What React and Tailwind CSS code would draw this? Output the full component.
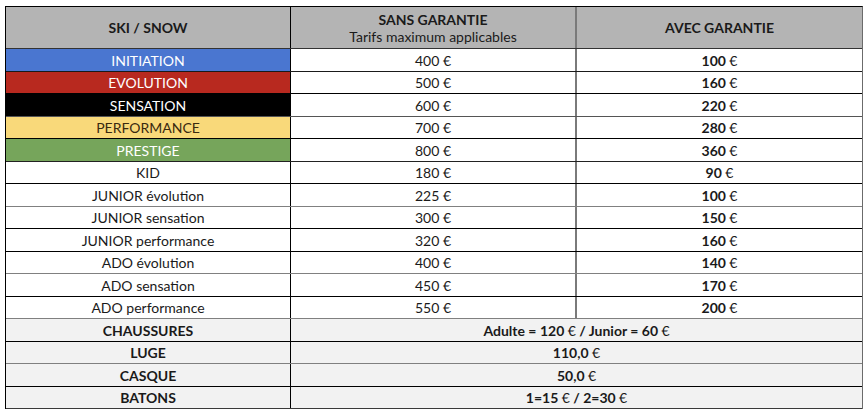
import React from 'react';

const rows = [
  { label: 'INITIATION', cls: 'bg-[#4a76d0] text-white', sans: '400', avec: '100', line: 'border-[#1a1a1a]' },
  { label: 'EVOLUTION', cls: 'bg-[#b8291f] text-white', sans: '500', avec: '160', line: 'border-black' },
  { label: 'SENSATION', cls: 'bg-black text-white', sans: '600', avec: '220', line: 'border-[#555]' },
  { label: 'PERFORMANCE', cls: 'bg-[#f9d97a] text-[#3a2a10]', sans: '700', avec: '280', line: 'border-black' },
  { label: 'PRESTIGE', cls: 'bg-[#76a55b] text-white', sans: '800', avec: '360', line: 'border-[#222]' },
  { label: 'KID', cls: 'bg-white text-[#1a1a1a]', sans: '180', avec: '90', line: 'border-black' },
  { label: 'JUNIOR évolution', cls: 'bg-white text-[#1a1a1a]', sans: '225', avec: '100', line: 'border-[#808080]' },
  { label: 'JUNIOR sensation', cls: 'bg-white text-[#1a1a1a]', sans: '300', avec: '150', line: 'border-black' },
  { label: 'JUNIOR performance', cls: 'bg-white text-[#1a1a1a]', sans: '320', avec: '160', line: 'border-black' },
  { label: 'ADO évolution', cls: 'bg-white text-[#1a1a1a]', sans: '400', avec: '140', line: 'border-[#808080]' },
  { label: 'ADO sensation', cls: 'bg-white text-[#1a1a1a]', sans: '450', avec: '170', line: 'border-black' },
  { label: 'ADO performance', cls: 'bg-white text-[#1a1a1a]', sans: '550', avec: '200', line: 'border-[#808080]' },
];

const extras = [
  { label: 'CHAUSSURES', value: <span>Adulte = 120 <Eur /> / Junior = 60 <Eur /></span>, line: 'border-black' },
  { label: 'LUGE', value: <span>110,0 <Eur /></span>, line: 'border-[#808080]' },
  { label: 'CASQUE', value: <span>50,0 <Eur /></span>, line: 'border-black' },
  { label: 'BATONS', value: <span>1=15 <Eur /> / 2=30 <Eur /></span>, line: 'border-[#3a3a3a]' },
];

function Eur() {
  return <span className="font-normal">€</span>;
}

export default function App() {
  return (
    <div className="w-[867px] h-[412px] bg-white pt-[6px] pl-[5px] font-['Lato','Open_Sans',sans-serif] text-[14px] text-[#1a1a1a]">
      <div className="w-[858px] border-l border-t border-r border-l-black border-t-black border-r-[#6b6b6b]">
        {/* Header */}
        <div className="flex h-[42px] bg-[#b4b4b4] border-b border-[#333]">
          <div className="w-[285px] flex items-center justify-center font-bold border-r border-black">SKI / SNOW</div>
          <div className="w-[286px] flex flex-col items-center justify-center leading-[17px] border-r-2 border-[#7a7a7a]">
            <span className="font-bold">SANS GARANTIE</span>
            <span>Tarifs maximum applicables</span>
          </div>
          <div className="flex-1 flex items-center justify-center font-bold">AVEC GARANTIE</div>
        </div>

        {rows.map((r, i) => (
          <div key={r.label} className={`flex ${i % 2 === 0 ? 'h-[23px]' : 'h-[22px]'} border-b ${r.line}`}>
            <div className={`w-[285px] flex items-center justify-center border-r border-black ${r.cls}`}>{r.label}</div>
            <div className="w-[286px] flex items-center justify-center border-r-2 border-[#7a7a7a]">
              {r.sans} €
            </div>
            <div className="flex-1 flex items-center justify-center font-bold">
              <span>{r.avec} <Eur /></span>
            </div>
          </div>
        ))}

        {extras.map((r, i) => (
          <div key={r.label} className={`flex ${i % 2 === 0 ? 'h-[23px]' : 'h-[22px]'} bg-[#f2f2f2] border-b ${r.line}`}>
            <div className="w-[285px] flex items-center justify-center font-bold border-r border-black">{r.label}</div>
            <div className="flex-1 flex items-center justify-center font-bold">{r.value}</div>
          </div>
        ))}
      </div>
    </div>
  );
}
